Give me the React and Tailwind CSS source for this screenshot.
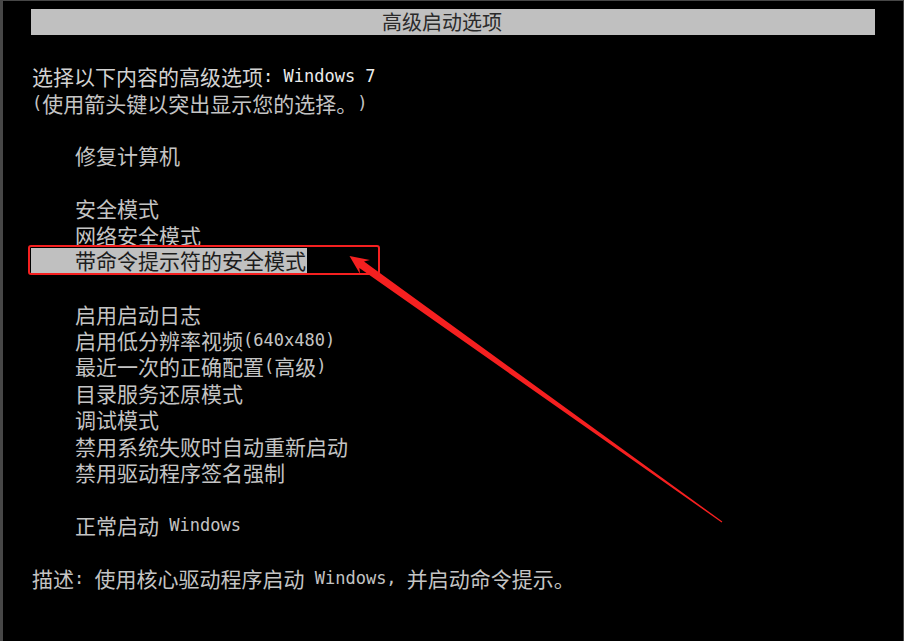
import React from 'react';

const cjk = '"Noto Sans CJK SC", "Noto Sans", sans-serif';
const mono = '"DejaVu Sans Mono", "Liberation Mono", monospace';

// null = blank line on the boot screen
const lines = [
  { text: '选择以下内容的高级选项: Windows 7', head: true },
  { text: '(使用箭头键以突出显示您的选择。)' },
  null,
  { text: '修复计算机', item: true },
  null,
  { text: '安全模式', item: true },
  { text: '网络安全模式', item: true },
  { text: '带命令提示符的安全模式', item: true, selected: true },
  null,
  { text: '启用启动日志', item: true },
  { text: '启用低分辨率视频(640x480)', item: true },
  { text: '最近一次的正确配置(高级)', item: true },
  { text: '目录服务还原模式', item: true },
  { text: '调试模式', item: true },
  { text: '禁用系统失败时自动重新启动', item: true },
  { text: '禁用驱动程序签名强制', item: true },
  null,
  { text: '正常启动 Windows', item: true },
  null,
  { text: '描述: 使用核心驱动程序启动 Windows, 并启动命令提示。' },
];

// ascii runs are half width, everything else full width
const Mixed = ({ text, latinClass = '' }) =>
  text.split(/([\x20-\x7e]+)/).map((part, i) =>
    i % 2 === 1 ? (
      <span key={i} className={'inline-block leading-[22px] text-[17px] whitespace-pre ' + latinClass} style={{ fontFamily: mono }}>
        {part}
      </span>
    ) : (
      <span key={i} className="inline-block leading-[22px] text-[21px]" style={{ fontFamily: cjk }}>
        {part}
      </span>
    )
  );

const Arrow = () => {
  // tip near the selected row, tail down to the right
  const tip = [349.5, 256];
  const tail = [722, 522];
  const dx = tail[0] - tip[0];
  const dy = tail[1] - tip[1];
  const len = Math.hypot(dx, dy);
  const u = [dx / len, dy / len];
  const n = [-u[1], u[0]];
  const at = (base, k) => [base[0] + n[0] * k, base[1] + n[1] * k];
  const base = [tip[0] + u[0] * 15, tip[1] + u[1] * 15];
  const back = [tip[0] + u[0] * 19, tip[1] + u[1] * 19];
  const pts = [
    tip,
    at(back, -8.5),
    at(base, -4),
    at(tail, -0.6),
    at(tail, 0.6),
    at(base, 4),
    at(back, 8.5),
  ];
  return <polygon points={pts.map((p) => p.join(',')).join(' ')} fill="#f52020" />;
};

export default function App() {
  return (
    <div className="relative w-[904px] h-[641px] overflow-hidden bg-black border-l-[3px] border-t border-r border-[#474747]">
      <div
        className="ml-[28px] mt-[8px] w-[844px] h-[26px] bg-[#c0c0c0] flex items-center justify-center pr-[22px] text-[20px] leading-[22px] text-[#2a2a2a]"
        style={{ fontFamily: cjk }}
      >
        高级启动选项
      </div>

      <div className="mt-[28px] pl-[29px] text-[#c4c4c4]">
        {lines.map((line, i) => {
          if (!line) return <div key={i} className="h-[26.4px]" />;
          if (line.selected) {
            return (
              <div key={i} className="h-[26.4px] flex items-start">
                <span className="-ml-px h-[25px] pl-[44px] pr-px flex items-center bg-[#c0c0c0] text-[#1c1c1c] leading-none">
                  <Mixed text={line.text} />
                </span>
              </div>
            );
          }
          return (
            <div
              key={i}
              className={
                'h-[26.4px] flex items-center whitespace-pre leading-none ' +
                (line.item ? 'pl-[43px] ' : '') +
                (line.head ? 'text-[#d2d2d2]' : '')
              }
            >
              <Mixed text={line.text} latinClass={line.head ? 'text-[#ececec]' : ''} />
            </div>
          );
        })}
      </div>

      <svg
        className="absolute left-[-3px] top-[-1px] pointer-events-none"
        width="904"
        height="641"
        viewBox="0 0 904 641"
      >
        <rect x="29" y="246" width="350" height="28" rx="2" fill="none" stroke="#f52020" strokeWidth="2" />
        <Arrow />
      </svg>
    </div>
  );
}
